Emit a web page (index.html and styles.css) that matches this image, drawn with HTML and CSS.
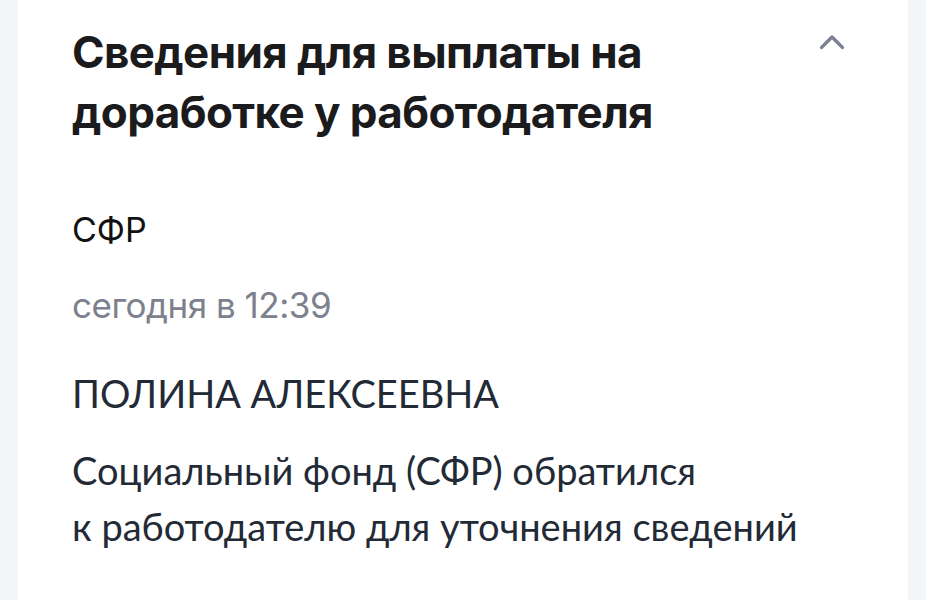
FILE: index.html
```html
<!DOCTYPE html>
<html lang="ru">
<head>
<meta charset="utf-8">
<link rel="stylesheet" href="styles.css">
</head>
<body>
<div class="page">
  <section class="card">
    <header class="card-head">
      <h1 class="title">Сведения для выплаты на доработке у работодателя</h1>
      <button class="toggle" aria-label="Свернуть">
        <svg width="26" height="16" viewBox="0 0 26 16"><path d="M2.5 13.5 L13 3 L23.5 13.5" fill="none" stroke="#7b8190" stroke-width="3.2" stroke-linecap="round" stroke-linejoin="round"/></svg>
      </button>
    </header>
    <div class="sender">СФР</div>
    <div class="date">сегодня в 12:39</div>
    <div class="name">ПОЛИНА АЛЕКСЕЕВНА</div>
    <p class="message">Социальный фонд (СФР) обратился<br>к работодателю для уточнения сведений</p>
  </section>
</div>
</body>
</html>
```

FILE: styles.css
```css
html, body {
  margin: 0;
  padding: 0;
  background: #f4f5f9;
}
.page {
  padding: 0 18px;
  height: 600px;
  overflow: hidden;
}
.card {
  background: #ffffff;
  min-height: 600px;
  padding: 22px 54px 0 54px;
  box-sizing: border-box;
}
.card-head {
  display: flex;
  justify-content: space-between;
  align-items: flex-start;
}
.title {
  margin: 0;
  width: 660px;
  font-family: Inter, "Noto Sans", sans-serif;
  font-weight: 700;
  font-size: 44px;
  line-height: 60px;
  letter-spacing: -0.6px;
  color: #1b1b1d;
}
.toggle {
  border: 0;
  background: none;
  padding: 0;
  margin: 12px 9px 0 0;
  width: 26px;
  height: 16px;
  display: flex;
}
.sender {
  margin-top: 68px;
  font-family: Inter, "Noto Sans", sans-serif;
  font-size: 34px;
  line-height: 40px;
  color: #111111;
}
.date {
  margin-top: 35px;
  font-family: Inter, "Noto Sans", sans-serif;
  font-size: 35px;
  line-height: 40px;
  letter-spacing: -0.5px;
  color: #7c818d;
}
.name {
  margin-top: 48px;
  font-family: Lato, "Noto Sans", sans-serif;
  font-size: 38px;
  line-height: 40px;
  color: #222a36;
}
.message {
  margin: 29px 0 0 0;
  font-family: Lato, "Noto Sans", sans-serif;
  font-size: 38px;
  line-height: 56px;
  color: #222a36;
}
```
